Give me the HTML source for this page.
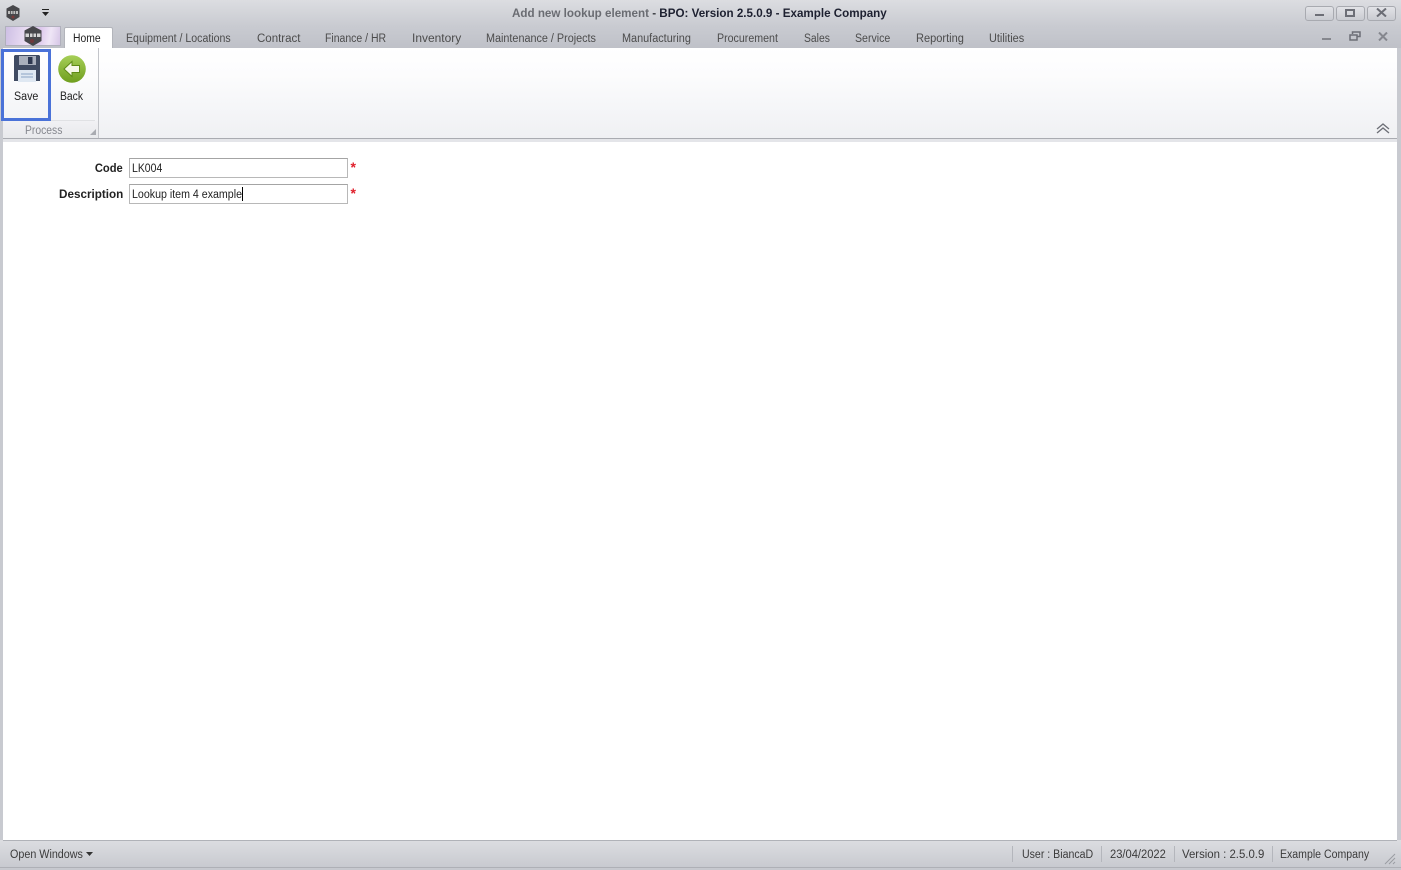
<!DOCTYPE html>
<html><head><meta charset="utf-8"><title>Add new lookup element</title>
<style>
html,body{margin:0;padding:0;width:1401px;height:870px;overflow:hidden;background:#c8cad0}
body{position:relative;font-family:"Liberation Sans",sans-serif;font-size:11.5px;color:#3b3b3b}
div,span,svg{position:absolute}
.t{white-space:nowrap;line-height:14px;transform-origin:0 50%}
.tab{top:32px;color:#4c4c4c}
.wb{top:6px;height:13px;border:1px solid #a8aab0;border-radius:3px;background:linear-gradient(#e2e3e7,#c9cbd1)}
.inp{left:129px;width:217px;height:18px;background:#fff;border:1px solid #b8b8b8;border-top-color:#a4a4a4}
.sep{top:846px;width:1px;height:16px;background:#b4b6bc}
</style></head><body>
<div style="left:0;top:0;width:1401px;height:26px;background:linear-gradient(#dcdde1,#c9cbd1)"></div>
<div style="left:0;top:26px;width:1401px;height:22px;background:linear-gradient(#c9cbd1,#bfc1c8)"></div>

<svg style="left:4px;top:4px" width="18" height="18" viewBox="0 0 18 18"><path d="M9 1L15.500 4.500V13L9 17L2.500 13V4.500Z" fill="#47474b"/><path d="M4 7H14V10H4Z" fill="#bdbdbd"/><path d="M6.500 7V10M9 7V10M11.500 7V10" stroke="#47474b" stroke-width=".8"/><circle cx="9" cy="13" r="1.500" fill="#7a3a3a"/></svg>
<svg style="left:41px;top:9px" width="10" height="8" viewBox="0 0 10 8"><path d="M1 0.500H8" stroke="#222" stroke-width="1"/><path d="M1 3H8L4.500 7Z" fill="#222"/></svg>

<div class="t" style="left:512px;top:7px;font-weight:bold;color:#6a6c72;transform:scaleX(1.011)">Add new lookup element<span style="position:static;color:#3a3c42"> - </span><span style="position:static;color:#1d2030">BPO: Version 2.5.0.9 - Example Company</span></div>

<div class="wb" style="left:1305px;width:27px"></div>
<div style="left:1315px;top:14px;width:9px;height:2px;background:#6c6e76"></div>
<div class="wb" style="left:1336px;width:27px"></div>
<div style="left:1345px;top:9px;width:6px;height:4px;border:2px solid #6c6e76"></div>
<div class="wb" style="left:1367px;width:27px"></div>
<svg style="left:1376px;top:8px" width="11" height="9" viewBox="0 0 11 9"><path d="M1 0.500L10 8.500M10 0.500L1 8.500" stroke="#6c6e76" stroke-width="2"/></svg>

<div style="left:5px;top:26px;width:54px;height:18px;border:1px solid #b0b0bc;background:linear-gradient(100deg,#cdbfe4,#ecdff4 40%,#dcc6ec 60%,#efe6f6 80%,#d6c6e6)"></div>
<svg style="left:22px;top:25px" width="22" height="22" viewBox="0 0 22 22"><path d="M11 1L19.500 5.500V16L11 21L2.500 16V5.500Z" fill="#47474b"/><path d="M3.500 8.500H18.500V12H3.500Z" fill="#d4d4d4"/><path d="M7.500 8.500V12M11 8.500V12M14.500 8.500V12" stroke="#47474b" stroke-width="1"/><circle cx="10" cy="16" r="2" fill="#70383c"/></svg>

<div style="left:64px;top:27px;width:47px;height:21px;background:#fff;border:1px solid #b3b5bb;border-bottom:none;border-radius:2px 2px 0 0"></div>
<div class="t tab" style="left:73px;color:#222;transform:scaleX(.9)">Home</div>
<div class="t tab" style="left:126px;transform:scaleX(.92)">Equipment / Locations</div>
<div class="t tab" style="left:257px">Contract</div>
<div class="t tab" style="left:325px;transform:scaleX(.91)">Finance / HR</div>
<div class="t tab" style="left:412px;transform:scaleX(1.04)">Inventory</div>
<div class="t tab" style="left:486px;transform:scaleX(.94)">Maintenance / Projects</div>
<div class="t tab" style="left:622px;transform:scaleX(.945)">Manufacturing</div>
<div class="t tab" style="left:717px;transform:scaleX(.925)">Procurement</div>
<div class="t tab" style="left:804px;transform:scaleX(.9)">Sales</div>
<div class="t tab" style="left:855px;transform:scaleX(.92)">Service</div>
<div class="t tab" style="left:916px;transform:scaleX(.96)">Reporting</div>
<div class="t tab" style="left:989px;transform:scaleX(.95)">Utilities</div>

<div style="left:1322px;top:38px;width:9px;height:2px;background:#85878e"></div>
<svg style="left:1349px;top:31px" width="12" height="10" viewBox="0 0 12 10"><path d="M3.500 3V1H11V5.500H8M1 4H8V9H1Z" fill="none" stroke="#6c6e76" stroke-width="1.500"/></svg>
<svg style="left:1378px;top:32px" width="10" height="9" viewBox="0 0 10 9"><path d="M1 0.500L9 8.500M9 0.500L1 8.500" stroke="#85878e" stroke-width="2"/></svg>

<div style="left:3px;top:48px;width:1394px;height:90px;background:linear-gradient(#fff,#fcfcfd 30%,#eff0f3)"></div>
<div style="left:3px;top:138px;width:1394px;height:1px;background:#a9abb1"></div>
<div style="left:3px;top:139px;width:1394px;height:3px;background:#e4e5e9"></div>
<div style="left:98px;top:48px;width:1px;height:90px;background:#c3c5ca"></div>
<div style="left:3px;top:120px;width:92px;height:1px;background:#e0e1e4"></div>
<div style="left:3px;top:121px;width:95px;height:17px;background:linear-gradient(#f1f1f4,#e8e9ec)"></div>
<div class="t" style="left:25px;top:124px;color:#85878e;transform:scaleX(.9)">Process</div>
<svg style="left:90px;top:129px" width="6" height="6" viewBox="0 0 6 6"><path d="M6 0V6H0Z" fill="#a9abb1"/></svg>

<div style="left:1px;top:49px;width:44px;height:66px;border:3px solid #4a72d8"></div>
<svg style="left:14px;top:55px" width="26" height="27" viewBox="0 0 26 27"><path d="M1 0H25L26 1V26H0V1Z" fill="#404b62"/><path d="M5 1H22V10H5Z" fill="#a9afbc"/><rect x="14" y="2" width="4.500" height="7" fill="#2e3850"/><rect x="4" y="15" width="18" height="12" fill="#dfe8f2"/><path d="M7 19H19M7 22H19" stroke="#8ba4c4" stroke-width="1"/></svg>
<div class="t" style="left:14px;top:90px;color:#222;transform:scaleX(.93)">Save</div>

<svg style="left:58px;top:55px" width="28" height="28" viewBox="0 0 28 28"><defs><linearGradient id="g" x1="0" y1="0" x2="0" y2="1"><stop offset="0" stop-color="#a6cf58"/><stop offset="1" stop-color="#6f9e1e"/></linearGradient></defs><circle cx="14" cy="14" r="13.800" fill="url(#g)"/><path d="M6 14L14 6.500V10.500H21.500V17.500H14V21.500Z" fill="#f6f8e8" stroke="#5f8a16" stroke-width="1"/></svg>
<div class="t" style="left:60px;top:90px;color:#222;transform:scaleX(.9)">Back</div>

<svg style="left:1376px;top:123px" width="14" height="11" viewBox="0 0 14 11"><path d="M1 6L7 1L13 6M1 10L7 5L13 10" fill="none" stroke="#6c6e76" stroke-width="1.300"/></svg>

<div style="left:3px;top:142px;width:1394px;height:698px;background:#fff"></div>
<div class="t" style="right:1278px;top:162px;font-weight:bold;color:#222;transform-origin:100% 50%;transform:scaleX(.97)">Code</div>
<div class="inp" style="top:158px"></div>
<div class="t" style="left:132px;top:162px;color:#222;transform:scaleX(.91)">LK004</div>
<div class="t" style="left:350.500px;top:160px;color:#e0202c;font-weight:bold;font-size:14px">*</div>
<div class="t" style="right:1278px;top:188px;font-weight:bold;color:#222;transform-origin:100% 50%;transform:scaleX(1.015)">Description</div>
<div class="inp" style="top:184px"></div>
<div class="t" style="left:132px;top:188px;color:#222;transform:scaleX(.925)">Lookup item 4 example</div>
<div style="left:242px;top:187px;width:1px;height:14px;background:#000"></div>
<div class="t" style="left:350.500px;top:186px;color:#e0202c;font-weight:bold;font-size:14px">*</div>

<div style="left:0;top:840px;width:1401px;height:30px;background:linear-gradient(#dcdde1,#c6c8ce)"></div>
<div style="left:3px;top:840px;width:1394px;height:1px;background:#b0b2b8"></div>
<div style="left:0;top:867px;width:1401px;height:1px;background:#aeb0b6"></div>
<div class="t" style="left:10px;top:848px;transform:scaleX(.935)">Open Windows</div>
<svg style="left:86px;top:852px" width="7" height="4" viewBox="0 0 7 4"><path d="M0 0H7L3.500 4Z" fill="#333"/></svg>
<div class="sep" style="left:1012px"></div>
<div class="t" style="left:1022px;top:848px;transform:scaleX(.92)">User : BiancaD</div>
<div class="sep" style="left:1101px"></div>
<div class="t" style="left:1110px;top:848px;transform:scaleX(.97)">23/04/2022</div>
<div class="sep" style="left:1174px"></div>
<div class="t" style="left:1182px;top:848px;transform:scaleX(.99)">Version : 2.5.0.9</div>
<div class="sep" style="left:1272px"></div>
<div class="t" style="left:1280px;top:848px;transform:scaleX(.917)">Example Company</div>
<svg style="left:1384px;top:853px" width="12" height="12" viewBox="0 0 12 12"><path d="M11 1L1 11M11 5L5 11M11 9L9 11" stroke="#9a9ca2" stroke-width="1"/></svg>
</body></html>
